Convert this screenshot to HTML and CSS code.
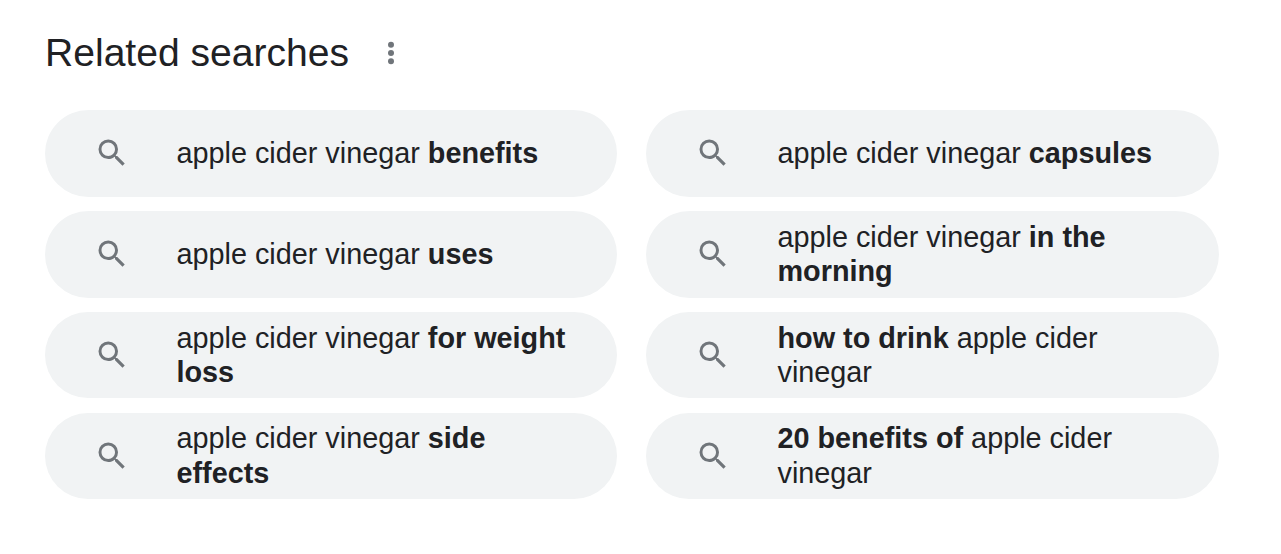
FILE: index.html
```html
<!DOCTYPE html>
<html lang="en">
<head>
<meta charset="utf-8">
<title>Related searches</title>
<link rel="stylesheet" href="styles.css">
</head>
<body>
<main class="page">
  <header class="head">
    <h2 class="title">Related searches</h2>
    <svg class="more" viewBox="0 0 10 32" aria-hidden="true"><circle cx="5" cy="7.8" r="3"/><circle cx="5" cy="16" r="3"/><circle cx="5" cy="24.2" r="3"/></svg>
  </header>
  <div class="grid">
    <a class="pill"><svg class="ico" viewBox="0 0 24 24"><path d="M15.5 14h-.79l-.28-.27A6.471 6.471 0 0 0 16 9.5 6.5 6.5 0 1 0 9.5 16c1.61 0 3.09-.59 4.23-1.57l.27.28v.79l5 4.99L20.49 19l-4.99-5zm-6 0C7.01 14 5 11.99 5 9.5S7.01 5 9.5 5 14 7.01 14 9.5 11.99 14 9.5 14z"/></svg><span class="txt">apple cider vinegar <b>benefits</b></span></a>
    <a class="pill"><svg class="ico" viewBox="0 0 24 24"><path d="M15.5 14h-.79l-.28-.27A6.471 6.471 0 0 0 16 9.5 6.5 6.5 0 1 0 9.5 16c1.61 0 3.09-.59 4.23-1.57l.27.28v.79l5 4.99L20.49 19l-4.99-5zm-6 0C7.01 14 5 11.99 5 9.5S7.01 5 9.5 5 14 7.01 14 9.5 11.99 14 9.5 14z"/></svg><span class="txt">apple cider vinegar <b>capsules</b></span></a>
    <a class="pill"><svg class="ico" viewBox="0 0 24 24"><path d="M15.5 14h-.79l-.28-.27A6.471 6.471 0 0 0 16 9.5 6.5 6.5 0 1 0 9.5 16c1.61 0 3.09-.59 4.23-1.57l.27.28v.79l5 4.99L20.49 19l-4.99-5zm-6 0C7.01 14 5 11.99 5 9.5S7.01 5 9.5 5 14 7.01 14 9.5 11.99 14 9.5 14z"/></svg><span class="txt">apple cider vinegar <b>uses</b></span></a>
    <a class="pill"><svg class="ico" viewBox="0 0 24 24"><path d="M15.5 14h-.79l-.28-.27A6.471 6.471 0 0 0 16 9.5 6.5 6.5 0 1 0 9.5 16c1.61 0 3.09-.59 4.23-1.57l.27.28v.79l5 4.99L20.49 19l-4.99-5zm-6 0C7.01 14 5 11.99 5 9.5S7.01 5 9.5 5 14 7.01 14 9.5 11.99 14 9.5 14z"/></svg><span class="txt">apple cider vinegar <b>in the<br>morning</b></span></a>
    <a class="pill"><svg class="ico" viewBox="0 0 24 24"><path d="M15.5 14h-.79l-.28-.27A6.471 6.471 0 0 0 16 9.5 6.5 6.5 0 1 0 9.5 16c1.61 0 3.09-.59 4.23-1.57l.27.28v.79l5 4.99L20.49 19l-4.99-5zm-6 0C7.01 14 5 11.99 5 9.5S7.01 5 9.5 5 14 7.01 14 9.5 11.99 14 9.5 14z"/></svg><span class="txt">apple cider vinegar <b>for weight<br>loss</b></span></a>
    <a class="pill"><svg class="ico" viewBox="0 0 24 24"><path d="M15.5 14h-.79l-.28-.27A6.471 6.471 0 0 0 16 9.5 6.5 6.5 0 1 0 9.5 16c1.61 0 3.09-.59 4.23-1.57l.27.28v.79l5 4.99L20.49 19l-4.99-5zm-6 0C7.01 14 5 11.99 5 9.5S7.01 5 9.5 5 14 7.01 14 9.5 11.99 14 9.5 14z"/></svg><span class="txt"><b>how to drink</b> apple cider<br>vinegar</span></a>
    <a class="pill"><svg class="ico" viewBox="0 0 24 24"><path d="M15.5 14h-.79l-.28-.27A6.471 6.471 0 0 0 16 9.5 6.5 6.5 0 1 0 9.5 16c1.61 0 3.09-.59 4.23-1.57l.27.28v.79l5 4.99L20.49 19l-4.99-5zm-6 0C7.01 14 5 11.99 5 9.5S7.01 5 9.5 5 14 7.01 14 9.5 11.99 14 9.5 14z"/></svg><span class="txt">apple cider vinegar <b>side<br>effects</b></span></a>
    <a class="pill"><svg class="ico" viewBox="0 0 24 24"><path d="M15.5 14h-.79l-.28-.27A6.471 6.471 0 0 0 16 9.5 6.5 6.5 0 1 0 9.5 16c1.61 0 3.09-.59 4.23-1.57l.27.28v.79l5 4.99L20.49 19l-4.99-5zm-6 0C7.01 14 5 11.99 5 9.5S7.01 5 9.5 5 14 7.01 14 9.5 11.99 14 9.5 14z"/></svg><span class="txt"><b>20 benefits of</b> apple cider<br>vinegar</span></a>
  </div>
</main>
</body>
</html>
```

FILE: styles.css
```css
html, body { margin: 0; padding: 0; background: #fff; }
body { font-family: "Liberation Sans", Arial, sans-serif; color: #202124; overflow: hidden; }
.page { padding: 0 62px 0 45px; }
.head { display: flex; align-items: center; height: 110px; padding-bottom: 4px; box-sizing: border-box; }
.title { margin: 0; font-size: 39.1px; font-weight: 400; line-height: 46px; }
.more { width: 10px; height: 32px; margin-left: 37px; fill: #70757a; }
.grid { display: grid; grid-template-columns: 572px 573px; grid-auto-rows: 86.7px; column-gap: 29px; row-gap: 14.2px; }
.pill { display: flex; align-items: center; background: #f1f3f4; border-radius: 44px; padding-left: 48.8px; }
.ico { width: 36px; height: 36px; flex: none; fill: #70757a; }
.txt { margin-left: 46.7px; font-size: 28.8px; line-height: 34.5px; }
.txt b { font-weight: 700; }
```
